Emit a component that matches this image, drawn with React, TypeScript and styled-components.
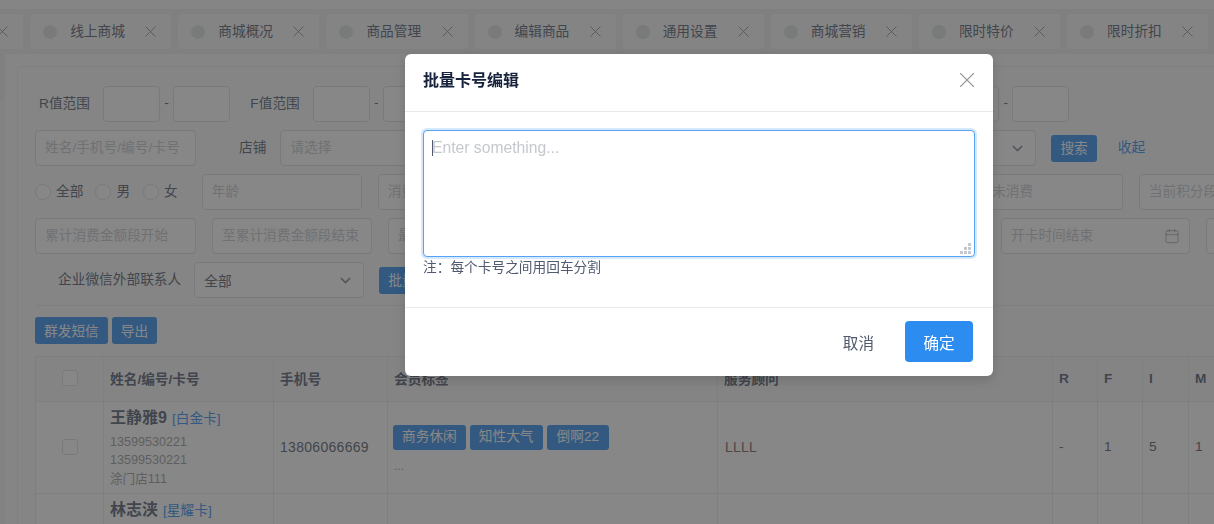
import React from "react";
import styled, { createGlobalStyle } from "styled-components";
import { X, ChevronDown, Calendar } from "lucide-react";

const Global = createGlobalStyle`
  html, body { margin: 0; padding: 0; background: #f5f7f9; overflow: hidden; }
  * { box-sizing: border-box; }
  body { font-family: "Liberation Sans", "Noto Sans CJK SC", sans-serif; font-size: 13.7px; color: #515a6e; }
`;

const Page = styled.div`
  width: 1214px; height: 524px; overflow: hidden; display: flex; flex-direction: column;
`;
const TopStrip = styled.div`height: 9px; background: #fafafa; flex: none;`;
const TabBar = styled.div`
  flex: none; height: 45px; padding: 5px 0; margin-left: -118px; display: flex; gap: 7px; background: #eeeeee; width: 1500px;
`;
const Tab = styled.div`
  flex: none; width: 141.14px; height: 35px; background: #f7f7f7; border-radius: 3px; display: flex; align-items: center;
  padding-left: 13px; padding-right: 11px;
`;
const Dot = styled.span`width: 14px; height: 14px; border-radius: 50%; background: #dbe1e1; flex: none;`;
const TabLabel = styled.span`margin: -3px 0 0 13px; flex: 1; color: #515a6e; white-space: nowrap;`;
const Body = styled.div`flex: 1; display: flex; min-height: 0;`;
const SideRail = styled.div`width: 5px; flex: none; background: #f3f3f3;`;
const RailThumb = styled.div`height: 46px; background: #e9eef0;`;
const Card = styled.div`flex: 1; min-width: 0; background: #fafafa; padding: 12px 0 0 12px; overflow: hidden;`;
const Panel = styled.div`
  width: 1300px; border: 1px solid #e8eaec; border-right: 0; border-bottom: 0; border-radius: 4px 0 0 0; background: #fafafa; padding: 19px 0 0 17px; min-height: 600px;
`;
const Row = styled.div`display: flex; align-items: center; height: 36px; margin-bottom: 8px;`;
const RangeGroup = styled.div`display: flex; align-items: center; flex: none; width: 209.8px;`;
const RangeLabel = styled.label`width: 68px; padding-right: 13px; margin-top: -4px; text-align: right; flex: none; white-space: nowrap;`;
const Dash = styled.span`width: 13px; text-align: center; flex: none; margin-top: -4px;`;
const Field = styled.div<{ $w: number; $ml?: number }>`
  flex: none; width: ${(p) => p.$w}px; margin-left: ${(p) => p.$ml ?? 0}px; height: 36px; border: 1px solid #dcdee2; border-radius: 4px; background: #fff;
  display: flex; align-items: center; justify-content: space-between; padding: 0 9px; overflow: hidden; white-space: nowrap;
`;
const Placeholder = styled.span`color: #c5c8ce; margin-top: -4px;`;
const Value = styled.span`color: #515a6e; margin-top: 0;`;
const FormLabel = styled.label<{ $ml: number; $mr: number }>`
  flex: none; margin: -4px ${(p) => p.$mr}px 0 ${(p) => p.$ml}px; white-space: nowrap;
`;
const SmallButton = styled.button<{ $ml?: number }>`
  flex: none; height: 27px; margin-left: ${(p) => p.$ml ?? 0}px; padding: 0 9px 2px; border: 0; border-radius: 3px; background: #2d8cf0; color: #fff;
  font: inherit; white-space: nowrap;
`;
const TextLink = styled.a`flex: none; margin: -4px 0 0 21px; color: #2d8cf0;`;
const RadioOption = styled.label<{ $ml?: number }>`display: flex; align-items: center; gap: 5px; flex: none; margin-left: ${(p) => p.$ml ?? 0}px;`;
const RadioCircle = styled.span`width: 16px; height: 16px; border: 1px solid #dcdee2; border-radius: 50%; background: #fff;`;
const RadioText = styled.span`margin-top: -4px;`;
const Divider = styled.div`height: 1px; background: #e8eaec; margin-top: -1px;`;
const ActionBar = styled.div`display: flex; gap: 4px; margin-top: 11px; margin-bottom: 12px;`;
const Table = styled.table`
  border-collapse: collapse; table-layout: fixed; width: 1240px; background: #fff; border: 1px solid #e8eaec; color: #515a6e;
`;
const Th = styled.th`
  height: 45px; padding: 0 0 2px 6px; text-align: left; font-weight: 700; background: #f8f8f9; border: 1px solid #e8eaec; white-space: nowrap;
`;
const Td = styled.td`height: 92px; padding: 0 0 2px 6px; border: 1px solid #e8eaec; vertical-align: middle;`;
const CheckCell = styled.div`display: flex; justify-content: center; padding-right: 6px;`;
const CheckBox = styled.span`display: block; width: 16px; height: 16px; border: 1px solid #dcdee2; border-radius: 3px; background: #fff;`;
const NameLine = styled.div`display: flex; align-items: baseline; gap: 5px; line-height: 22px; margin-bottom: 3px;`;
const Name = styled.b`font-size: 16px; color: #515a6e;`;
const Level = styled.a`color: #2d8cf0;`;
const SubLine = styled.div`font-size: 12.6px; line-height: 18.2px; color: #999;`;
const Phone = styled.span`letter-spacing: 0.3px; font-size: 14px;`;
const Adviser = styled.span`margin-left: 1px; font-size: 14px; letter-spacing: 0.2px; color: #7b5a5a;`;
const Tags = styled.div`display: flex; gap: 4px; margin-left: -1px; padding-top: 4px;`;
const TagItem = styled.span<{ $pad?: number }>`height: 25px; line-height: 23px; padding: 0 ${(p) => p.$pad ?? 9}px; background: #2d8cf0; color: #fff; border-radius: 3px; white-space: nowrap;`;
const More = styled.div`color: #999; font-size: 12px; line-height: 14px; margin-top: 9px;`;
const NameCell = styled(Td)`padding-top: 5px; padding-bottom: 5px;`;
const SecondName = styled(Td)`padding-top: 5px; vertical-align: top;`;

const Overlay = styled.div`
  position: fixed; inset: 0; background: rgba(55, 55, 55, 0.6); display: flex; align-items: flex-start; padding: 54px 0 0 405px;
`;
const Modal = styled.div`
  width: 588px; height: 322px; background: #fff; border-radius: 6px; box-shadow: 0 4px 12px rgba(0, 0, 0, 0.15); display: flex; flex-direction: column;
`;
const ModalHeader = styled.div`
  flex: none; height: 58px; border-bottom: 1px solid #e8eaec; padding: 0 18px; display: flex; align-items: center; justify-content: space-between;
`;
const ModalTitle = styled.div`font-size: 16px; font-weight: 700; color: #17233d; margin-top: -8px;`;
const CloseButton = styled.span`display: flex; color: #999; margin-top: -5px; margin-right: -5px;`;
const ModalBody = styled.div`flex: none; height: 195px; padding: 18px 18px 0;`;
const TextAreaWrap = styled.div`position: relative; width: 552px; height: 127px;`;
const TextArea = styled.textarea`
  display: block; width: 100%; height: 100%; padding: 5px 8px; border: 1px solid #57a3f3; border-radius: 4px; outline: 0; resize: none;
  box-shadow: 0 0 0 2px rgba(45, 140, 240, 0.2); font: 15.7px/1.5 "Liberation Sans", "Noto Sans CJK SC", sans-serif; color: #515a6e;
  caret-color: transparent;
  &::placeholder { color: #c5c8ce; opacity: 1; }
`;
const Caret = styled.span`position: absolute; left: 9px; top: 10px; width: 1px; height: 16px; background: #515a6e;`;
const Grip = styled.svg`position: absolute; right: 4px; bottom: 3px; width: 11px; height: 11px; fill: #c5c8ce;`;
const Note = styled.div`line-height: 20px; color: #515a6e; margin-top: 1px;`;
const ModalFooter = styled.div`
  flex: 1; border-top: 1px solid #e8eaec; padding: 13px 20px 0 0; display: flex; justify-content: flex-end; align-items: flex-start; gap: 31px;
`;
const CancelButton = styled.button`
  border: 0; background: none; padding: 0; height: 41px; font: 15.6px "Liberation Sans", "Noto Sans CJK SC", sans-serif; color: #515a6e;
`;
const OkButton = styled.button`
  border: 0; width: 68px; height: 41px; border-radius: 4px; background: #2d8cf0; color: #fff; font: 15.6px "Liberation Sans", "Noto Sans CJK SC", sans-serif;
`;

const tabs = ["", "线上商城", "商城概况", "商品管理", "编辑商品", "通用设置", "商城营销", "限时特价", "限时折扣"];
const ranges = ["R值范围", "F值范围", "I值范围", "M值范围", "积分范围"];
const noteText = "注\uFF1A每个卡号之间用回车分割";

export default function App() {
  return (
    <Page>
      <Global />
      <TopStrip />
      <TabBar>
        {tabs.map((t) => (
          <Tab key={t}>
            <Dot />
            <TabLabel>{t}</TabLabel>
            <X size={19} strokeWidth={1.1} color="#808695" />
          </Tab>
        ))}
      </TabBar>
      <Body>
        <SideRail><RailThumb /></SideRail>
        <Card>
          <Panel>
            <Row>
              {ranges.map((r) => (
                <RangeGroup key={r}>
                  <RangeLabel>{r}</RangeLabel>
                  <Field $w={57} />
                  <Dash>-</Dash>
                  <Field $w={57} />
                </RangeGroup>
              ))}
            </Row>
            <Row>
              <Field $w={161}><Placeholder>姓名/手机号/编号/卡号</Placeholder></Field>
              <FormLabel $ml={43} $mr={14}>店铺</FormLabel>
              <Field $w={756}>
                <Placeholder>请选择</Placeholder>
                <ChevronDown size={17} color="#808695" />
              </Field>
              <SmallButton $ml={15}>搜索</SmallButton>
              <TextLink>收起</TextLink>
            </Row>
            <Row>
              <RadioOption><RadioCircle /><RadioText>全部</RadioText></RadioOption>
              <RadioOption $ml={12}><RadioCircle /><RadioText>男</RadioText></RadioOption>
              <RadioOption $ml={13}><RadioCircle /><RadioText>女</RadioText></RadioOption>
              <Field $w={160} $ml={24}><Placeholder>年龄</Placeholder></Field>
              <Field $w={160} $ml={16}><Placeholder>消费次数开始</Placeholder></Field>
              <Field $w={160} $ml={16}><Placeholder>消费次数结束</Placeholder></Field>
              <Field $w={209} $ml={16}><Placeholder>积分</Placeholder></Field>
              <Field $w={168} $ml={16}><Placeholder>几天未消费</Placeholder></Field>
              <Field $w={160} $ml={16}><Placeholder>当前积分段开始</Placeholder></Field>
            </Row>
            <Row>
              <Field $w={161}><Placeholder>累计消费金额段开始</Placeholder></Field>
              <Field $w={160} $ml={16}><Placeholder>至累计消费金额段结束</Placeholder></Field>
              <Field $w={160} $ml={16}><Placeholder>最近消费金额</Placeholder></Field>
              <Field $w={421} $ml={16}><Placeholder>开卡时间开始</Placeholder></Field>
              <Field $w={189} $ml={16}>
                <Placeholder>开卡时间结束</Placeholder>
                <Calendar size={16} strokeWidth={1} color="#808695" />
              </Field>
              <Field $w={160} $ml={16} />
            </Row>
            <Row>
              <FormLabel $ml={23} $mr={13}>企业微信外部联系人</FormLabel>
              <Field $w={170}>
                <Value>全部</Value>
                <ChevronDown size={17} color="#808695" />
              </Field>
              <SmallButton $ml={15}>批量卡号编辑</SmallButton>
            </Row>
            <Divider />
            <ActionBar>
              <SmallButton>群发短信</SmallButton>
              <SmallButton>导出</SmallButton>
            </ActionBar>
            <Table>
              <colgroup>
                <col width={68} /><col width={170} /><col width={114} /><col width={330} /><col width={335} />
                <col width={45} /><col width={45} /><col width={46} /><col width={87} />
              </colgroup>
              <thead>
                <tr>
                  <Th><CheckCell><CheckBox /></CheckCell></Th>
                  <Th>姓名/编号/卡号</Th>
                  <Th>手机号</Th>
                  <Th>会员标签</Th>
                  <Th>服务顾问</Th>
                  <Th>R</Th>
                  <Th>F</Th>
                  <Th>I</Th>
                  <Th>M</Th>
                </tr>
              </thead>
              <tbody>
                <tr>
                  <Td><CheckCell><CheckBox /></CheckCell></Td>
                  <NameCell>
                    <NameLine><Name>王静雅9</Name><Level>[白金卡]</Level></NameLine>
                    <SubLine>13599530221</SubLine>
                    <SubLine>13599530221</SubLine>
                    <SubLine>涂门店111</SubLine>
                  </NameCell>
                  <Td><Phone>13806066669</Phone></Td>
                  <Td>
                    <Tags>
                      <TagItem>商务休闲</TagItem>
                      <TagItem>知性大气</TagItem>
                      <TagItem $pad={10}>倒啊22</TagItem>
                    </Tags>
                    <More>...</More>
                  </Td>
                  <Td><Adviser>LLLL</Adviser></Td>
                  <Td>-</Td>
                  <Td>1</Td>
                  <Td>5</Td>
                  <Td>1</Td>
                </tr>
                <tr>
                  <Td />
                  <SecondName>
                    <NameLine><Name>林志浃</Name><Level>[星耀卡]</Level></NameLine>
                  </SecondName>
                  <Td /><Td /><Td /><Td /><Td /><Td /><Td />
                </tr>
              </tbody>
            </Table>
          </Panel>
        </Card>
      </Body>
      <Overlay>
        <Modal>
          <ModalHeader>
            <ModalTitle>批量卡号编辑</ModalTitle>
            <CloseButton><X size={26} strokeWidth={1} /></CloseButton>
          </ModalHeader>
          <ModalBody>
            <TextAreaWrap>
              <TextArea placeholder="Enter something..." autoFocus />
              <Caret />
              <Grip viewBox="0 0 11 11">
                <rect x="8" y="0" width="3" height="3" />
                <rect x="4" y="4" width="3" height="3" />
                <rect x="8" y="4" width="3" height="3" />
                <rect x="0" y="8" width="3" height="3" />
                <rect x="4" y="8" width="3" height="3" />
                <rect x="8" y="8" width="3" height="3" />
              </Grip>
            </TextAreaWrap>
            <Note>{noteText}</Note>
          </ModalBody>
          <ModalFooter>
            <CancelButton>取消</CancelButton>
            <OkButton>确定</OkButton>
          </ModalFooter>
        </Modal>
      </Overlay>
    </Page>
  );
}
